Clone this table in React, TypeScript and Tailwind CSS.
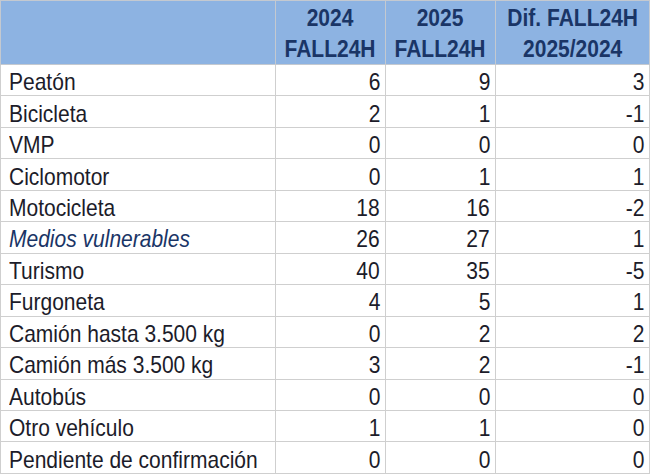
const rows: [string, number, number, number, boolean?][] = [
  ["Peatón", 6, 9, 3],
  ["Bicicleta", 2, 1, -1],
  ["VMP", 0, 0, 0],
  ["Ciclomotor", 0, 1, 1],
  ["Motocicleta", 18, 16, -2],
  ["Medios vulnerables", 26, 27, 1, true],
  ["Turismo", 40, 35, -5],
  ["Furgoneta", 4, 5, 1],
  ["Camión hasta 3.500 kg", 0, 2, 2],
  ["Camión más 3.500 kg", 3, 2, -1],
  ["Autobús", 0, 0, 0],
  ["Otro vehículo", 1, 1, 0],
  ["Pendiente de confirmación", 0, 0, 0],
];

// the sheet's glyphs are a bit narrower than Arial, so squeeze them horizontally
function Num({ v }: { v: number }) {
  return <span className="inline-block scale-x-[0.875] origin-right">{v}</span>;
}

export default function App() {
  return (
    <div className="w-[650px] h-[475px] bg-white overflow-hidden font-['Liberation_Sans',Arial,sans-serif]">
      <table className="w-[649px] border-collapse table-fixed text-[24px]">
        <colgroup>
          <col className="w-[275px]" />
          <col className="w-[110px]" />
          <col className="w-[110px]" />
          <col className="w-[154px]" />
        </colgroup>
        <thead>
          <tr className="h-[64px] bg-[#8db3e2] text-[#1a3566] font-bold leading-[31px]">
            <th className="border border-[#c4c9d0] p-0"></th>
            <th className="border border-[#c4c9d0] p-0 text-center whitespace-nowrap">
              <span className="inline-block scale-x-[0.875]">2024<br />FALL24H</span>
            </th>
            <th className="border border-[#c4c9d0] p-0 text-center whitespace-nowrap">
              <span className="inline-block scale-x-[0.875]">2025<br />FALL24H</span>
            </th>
            <th className="border border-[#c4c9d0] p-0 text-center whitespace-nowrap">
              <span className="inline-block scale-x-[0.875]">Dif. FALL24H<br />2025/2024</span>
            </th>
          </tr>
        </thead>
        <tbody className="text-[#1c1c2a] leading-[27px]">
          {rows.map(([name, a, b, d, it]) => (
            <tr key={name} className="h-[31.46px]">
              <td className={`border border-[#cfcfcf] pl-[8px] pt-[3px] pb-0 whitespace-nowrap ${it ? "italic text-[#1a3566]" : ""}`}>
                <span className="inline-block scale-x-[0.875] origin-left">{name}</span>
              </td>
              <td className="border border-[#cfcfcf] text-right pr-[5px] pt-[3px] pb-0"><Num v={a} /></td>
              <td className="border border-[#cfcfcf] text-right pr-[5px] pt-[3px] pb-0"><Num v={b} /></td>
              <td className="border border-[#cfcfcf] text-right pr-[5px] pt-[3px] pb-0"><Num v={d} /></td>
            </tr>
          ))}
        </tbody>
      </table>
    </div>
  );
}
